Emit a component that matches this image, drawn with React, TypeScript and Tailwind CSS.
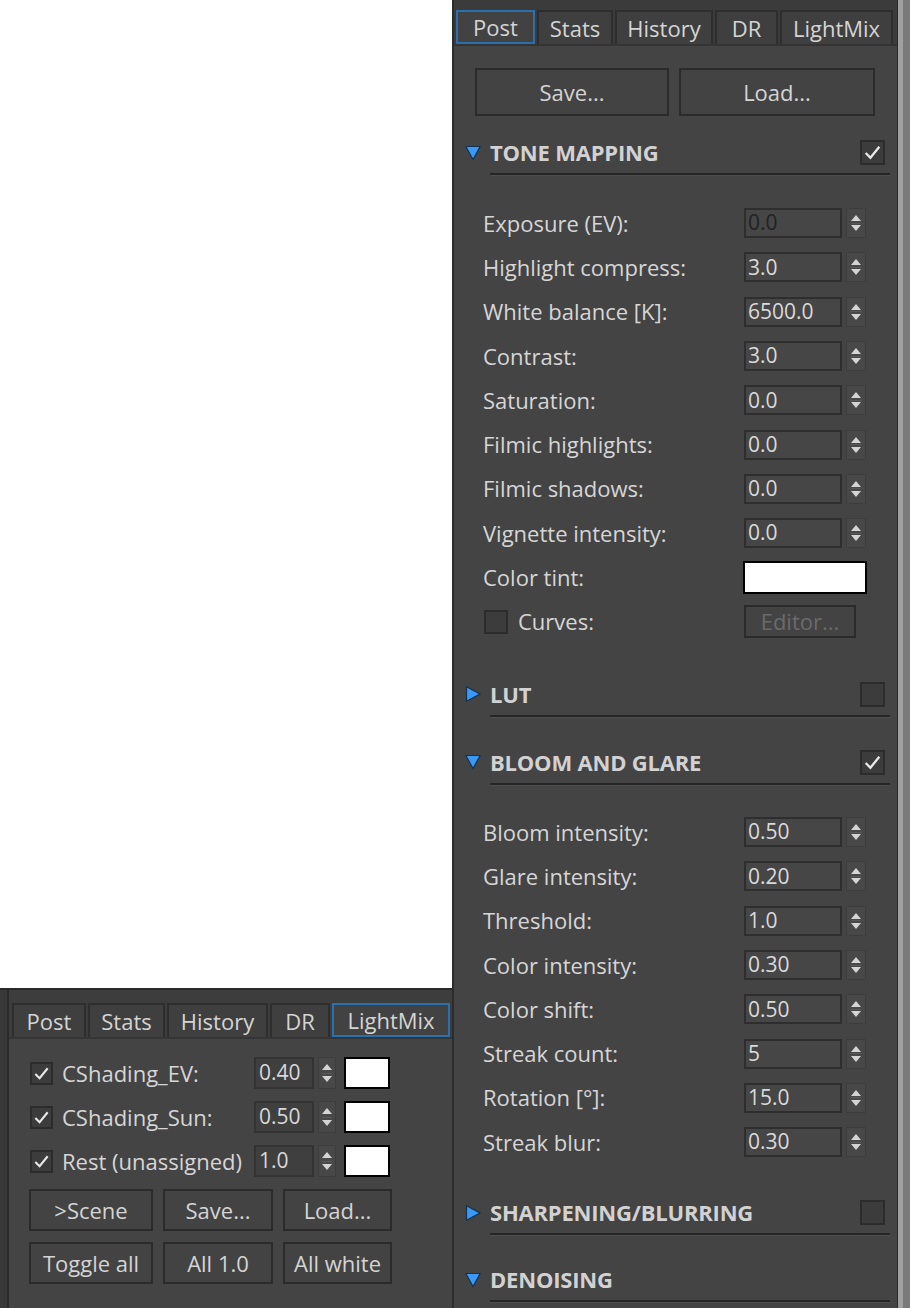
import React from "react";

const FONT = "font-['Open_Sans','Noto_Sans',sans-serif]";

function Check({ s = 20 }: { s?: number }) {
  return (
    <svg width={s} height={s} viewBox="0 0 20 20">
      <polyline points="3.5,10.5 8,15 16.5,4.5" fill="none" stroke="#e8e8e8" strokeWidth="2.2" />
    </svg>
  );
}

function CheckBox({ checked, size = 25 }: { checked?: boolean; size?: number }) {
  return (
    <div
      className="flex items-center justify-center border-2 border-[#2c2c2c] bg-[#3c3c3c] shrink-0"
      style={{ width: size, height: size }}
    >
      {checked ? <Check s={size - 4} /> : null}
    </div>
  );
}

function Tri({ down }: { down?: boolean }) {
  return (
    <svg width="16" height="16" viewBox="0 0 16 16" className="shrink-0 block">
      {down ? (
        <polygon points="0.8,1.5 15.2,1.5 8,14.5" fill="#3a98f7" stroke="#12324f" strokeWidth="1.2" />
      ) : (
        <polygon points="1.5,0.8 15,8 1.5,15.2" fill="#3a98f7" stroke="#12324f" strokeWidth="1.2" />
      )}
    </svg>
  );
}

function Spinner({ h = 30, w = 20 }: { h?: number; w?: number }) {
  return (
    <div
      className="flex flex-col items-center justify-between py-[6px] bg-[#484848] border border-[#3d3d3d] shrink-0"
      style={{ width: w, height: h }}
    >
      <div className="w-0 h-0 border-l-[5px] border-r-[5px] border-b-[6px] border-l-transparent border-r-transparent border-b-[#d4d4d4]" />
      <div className="w-[10px] h-px bg-[#5a5a5a]" />
      <div className="w-0 h-0 border-l-[5px] border-r-[5px] border-t-[6px] border-l-transparent border-r-transparent border-t-[#d4d4d4]" />
    </div>
  );
}

function Header({ title, open, checked, noBox }: { title: string; open?: boolean; checked?: boolean; noBox?: boolean }) {
  return (
    <div className="h-[44px] flex flex-col shrink-0">
      <div className="h-[42px] flex items-center pl-[11px] pr-[12px]">
        <Tri down={open} />
        <span className="ml-[9px] font-bold text-[22px] text-[#d2d2d2] tracking-[-0.2px]">{title}</span>
        <div className="ml-auto">{noBox ? null : <CheckBox checked={checked} />}</div>
      </div>
      <div className="ml-[36px] mr-[7px] h-[3px] border-t-2 border-[#262626] bg-[#4e4e4e]" />
    </div>
  );
}

function Row({ label, value, dim }: { label: string; value: string; dim?: boolean }) {
  return (
    <div className="h-[44.3px] flex items-center shrink-0">
      <div className="w-[290px] pl-[29px] text-[22px] text-[#d6d6d6] whitespace-nowrap">{label}</div>
      <div className="w-[98px] h-[30px] border-2 border-[#2e2e2e] bg-[#464646] flex items-center pl-[2px] text-[21px]">
        <span className={dim ? "text-[#222222]" : "text-[#dadada]"}>{value}</span>
      </div>
      <div className="ml-[4px]">
        <Spinner />
      </div>
    </div>
  );
}

function Tab({ label, w, active }: { label: string; w: number; active?: boolean }) {
  return (
    <div
      className={
        "h-full flex items-center justify-center text-[22px] text-[#d4d4d4] shrink-0 " +
        (active ? "border-2 border-[#2a6fae] bg-[#424242]" : "border-2 border-[#2e2e2e] border-b-0 bg-[#3f3f3f]")
      }
      style={{ width: w }}
    >
      {label}
    </div>
  );
}

function Btn({ label, w, h, disabled }: { label: string; w: number; h: number; disabled?: boolean }) {
  return (
    <div
      className={
        "flex items-center justify-center border-2 border-[#2b2b2b] bg-[#434343] text-[22px] shrink-0 whitespace-nowrap " +
        (disabled ? "text-[#6a6a6a]" : "text-[#d4d4d4]")
      }
      style={{ width: w, height: h }}
    >
      {label}
    </div>
  );
}

function MixRow({ label, value }: { label: string; value: string }) {
  return (
    <div className="h-[44px] flex items-center">
      <div className="ml-[21px]">
        <CheckBox checked size={23} />
      </div>
      <div className="ml-[9px] w-[192px] text-[22px] text-[#d6d6d6] whitespace-nowrap">{label}</div>
      <div className="w-[60px] h-[32px] border-2 border-[#333] bg-[#3f3f3f] flex items-center pl-[3px] text-[21px] text-[#d8d8d8]">
        {value}
      </div>
      <div className="ml-[4px]">
        <Spinner h={32} w={18} />
      </div>
      <div className="ml-[8px] w-[46px] h-[32px] bg-white border-2 border-black" />
    </div>
  );
}

export default function App() {
  return (
    <div className={"w-[910px] h-[1308px] bg-white flex overflow-hidden " + FONT}>
      {/* Left column */}
      <div className="w-[452px] h-full flex flex-col">
        <div className="flex-1 bg-white" />
        <div className="h-[320px] border-t-2 border-[#2a2a2a] flex">
          <div className="w-[9px] bg-[#383838] border-r-2 border-[#2a2a2a]" />
          <div className="flex-1 bg-[#444444] flex flex-col">
            <div className="h-[49px] pt-[13px] pl-[3px] flex gap-[2px] border-b-2 border-[#353535] bg-[#3d3d3d]">
              <Tab label="Post" w={74} />
              <Tab label="Stats" w={77} />
              <Tab label="History" w={101} />
              <Tab label="DR" w={60} />
              <Tab label="LightMix" w={118} active />
            </div>
            <div className="pt-[12px] flex flex-col">
              <MixRow label="CShading_EV:" value="0.40" />
              <MixRow label="CShading_Sun:" value="0.50" />
              <MixRow label="Rest (unassigned)" value="1.0" />
            </div>
            <div className="mt-[6px] ml-[20px] flex gap-[10px]">
              <Btn label=">Scene" w={124} h={42} />
              <Btn label="Save..." w={110} h={42} />
              <Btn label="Load..." w={109} h={42} />
            </div>
            <div className="mt-[11px] ml-[20px] flex gap-[10px]">
              <Btn label="Toggle all" w={124} h={42} />
              <Btn label="All 1.0" w={110} h={42} />
              <Btn label="All white" w={109} h={42} />
            </div>
          </div>
        </div>
      </div>

      {/* Right panel */}
      <div className="w-[458px] h-full flex">
        <div className="w-[445px] h-full bg-[#444444] border-l-2 border-[#2c2c2c] flex flex-col">
          <div className="h-[46px] pt-[10px] pl-[2px] flex gap-[2px] bg-[#3b3b3b] border-b-2 border-[#343434] shrink-0">
            <Tab label="Post" w={79} active />
            <Tab label="Stats" w={76} />
            <Tab label="History" w={98} />
            <Tab label="DR" w={63} />
            <Tab label="LightMix" w={113} />
          </div>

          <div className="mt-[22px] ml-[21px] flex gap-[10px] shrink-0">
            <Btn label="Save..." w={194} h={48} />
            <Btn label="Load..." w={196} h={48} />
          </div>

          <div className="mt-[16px]">
            <Header title="TONE MAPPING" open checked />
          </div>
          <div className="mt-[25px] flex flex-col">
            <Row label="Exposure (EV):" value="0.0" dim />
            <Row label="Highlight compress:" value="3.0" />
            <Row label="White balance [K]:" value="6500.0" />
            <Row label="Contrast:" value="3.0" />
            <Row label="Saturation:" value="0.0" />
            <Row label="Filmic highlights:" value="0.0" />
            <Row label="Filmic shadows:" value="0.0" />
            <Row label="Vignette intensity:" value="0.0" />
            <div className="h-[44.3px] flex items-center shrink-0">
              <div className="w-[289px] pl-[29px] text-[22px] text-[#d6d6d6]">Color tint:</div>
              <div className="w-[124px] h-[33px] bg-white border-2 border-black" />
            </div>
            <div className="h-[44.3px] flex items-center shrink-0">
              <div className="w-[290px] pl-[30px] flex items-center">
                <CheckBox size={24} />
                <span className="ml-[10px] text-[22px] text-[#d6d6d6]">Curves:</span>
              </div>
              <Btn label="Editor..." w={112} h={33} disabled />
            </div>
          </div>

          <div className="mt-[30px]">
            <Header title="LUT" />
          </div>
          <div className="mt-[24px]">
            <Header title="BLOOM AND GLARE" open checked />
          </div>
          <div className="mt-[24px] flex flex-col">
            <Row label="Bloom intensity:" value="0.50" />
            <Row label="Glare intensity:" value="0.20" />
            <Row label="Threshold:" value="1.0" />
            <Row label="Color intensity:" value="0.30" />
            <Row label="Color shift:" value="0.50" />
            <Row label="Streak count:" value="5" />
            <Row label="Rotation [°]:" value="15.0" />
            <Row label="Streak blur:" value="0.30" />
          </div>
          <div className="mt-[28px]">
            <Header title="SHARPENING/BLURRING" />
          </div>
          <div className="mt-[23px]">
            <Header title="DENOISING" open noBox />
          </div>
        </div>
        <div className="w-[1px] h-full bg-[#2a2a2a]" />
        <div className="w-[5px] h-full bg-[#a0a0a0]" />
        <div className="flex-1 h-full bg-[#7a7a7a]" />
      </div>
    </div>
  );
}
